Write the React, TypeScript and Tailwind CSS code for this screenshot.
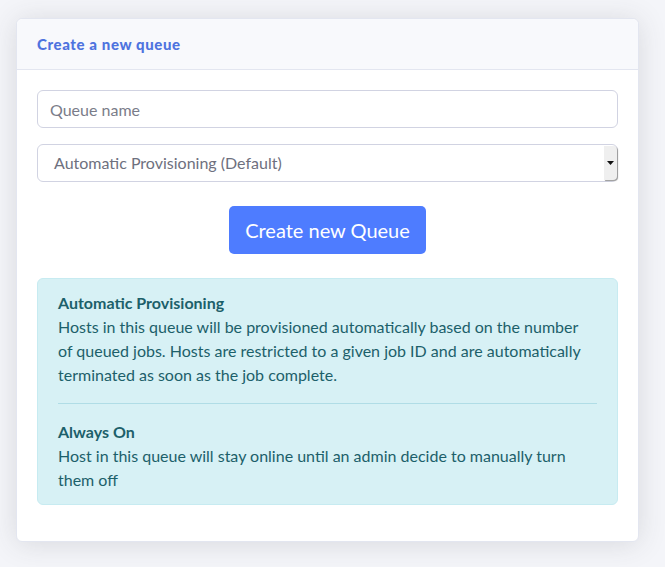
export default function App() {
  return (
    <div className="min-h-[567px] bg-[#f4f5f9] pt-[18px] pl-[16px] pr-[26px] pb-[26px] font-['Lato','Noto_Sans',sans-serif] text-[#6e707e]">
      <div className="w-[623px] rounded-[6px] border border-[#e3e6f0] bg-white shadow-[0_2px_28px_0_rgba(58,59,69,0.15)]">
        <div className="h-[51px] flex items-center px-5 bg-[#f8f9fc] border-b border-[#e3e6f0] rounded-t-[6px]">
          <h6 className="text-[15px] font-black tracking-[0.6px] text-[#4e73df]">Create a new queue</h6>
        </div>
        <div className="p-5">
          <input
            type="text"
            placeholder="Queue name"
            className="block w-full h-[38px] px-3 text-base rounded-[6px] border border-[#d1d3e2] bg-white text-[#6e707e] placeholder:text-[#7a7c89] outline-none"
          />
          <div className="mt-4 flex h-[38px] w-full items-center rounded-[6px] border border-[#d1d3e2] bg-white">
            <span className="flex-1 pl-4 text-base text-[#6e707e]">Automatic Provisioning (Default)</span>
            <span className="flex h-[34px] w-[13px] items-center justify-center self-center rounded-r-[4px] bg-[#efefef] shadow-[1px_1px_1px_#9a9a9a]">
              <svg width="7" height="4" viewBox="0 0 7 4">
                <path d="M0 0h7L3.5 4z" fill="#111" />
              </svg>
            </span>
          </div>
          <div className="mt-6 flex justify-center">
            <button className="h-[48px] px-4 rounded-[5px] bg-[#4e7cff] text-[20px] text-white">Create new Queue</button>
          </div>
          <div className="mt-6 mb-4 rounded-[6px] border border-[#c7ebf1] bg-[#d7f1f5] px-5 py-3 text-base leading-6 text-[#1c606a]">
            <div className="font-bold">Automatic Provisioning</div>
            <p>
              Hosts in this queue will be provisioned automatically based on the number
              <br />
              of queued jobs. Hosts are restricted to a given job ID and are automatically terminated as soon as the
              job complete.
            </p>
            <hr className="my-4 border-t border-[#b0dde6]" />
            <div className="font-bold">Always On</div>
            <p>Host in this queue will stay online until an admin decide to manually turn them off</p>
          </div>
        </div>
      </div>
    </div>
  );
}
